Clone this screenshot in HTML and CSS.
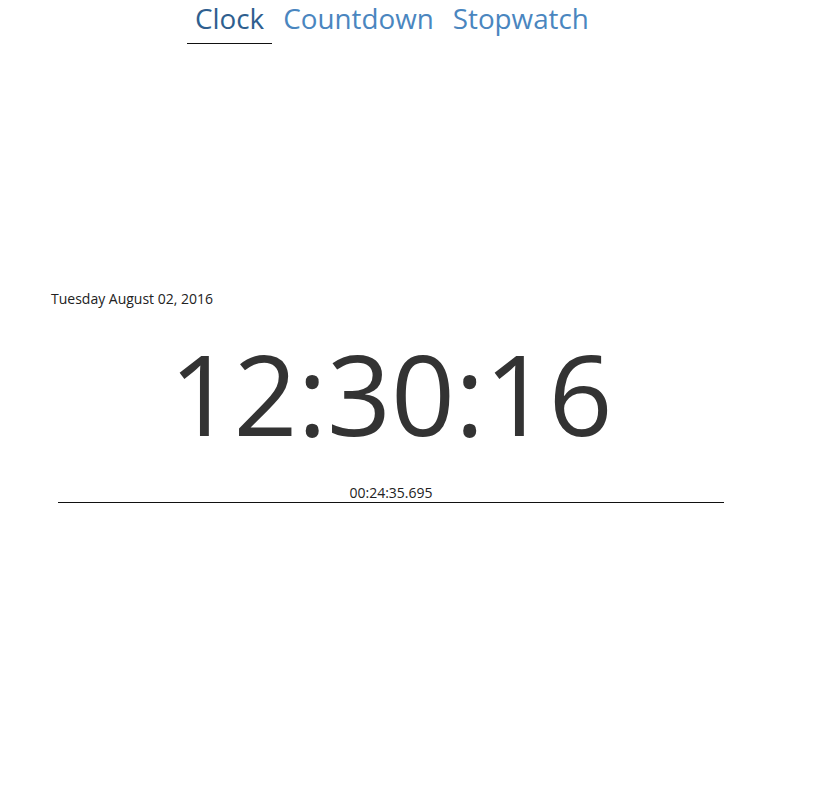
FILE: index.html
```html
<!DOCTYPE html>
<html>
<head>
<meta charset="utf-8">
<link rel="stylesheet" href="styles.css">
</head>
<body>
<nav class="tabs">
  <a class="tab active">Clock</a>
  <a class="tab">Countdown</a>
  <a class="tab">Stopwatch</a>
</nav>
<main class="clock">
  <div class="date">Tuesday August 02, 2016</div>
  <div class="time">12:30:16</div>
  <div class="elapsed">00:24:35.695</div>
</main>
</body>
</html>
```
FILE: styles.css
```css
html, body {
  margin: 0;
  padding: 0;
  background: #fff;
  font-family: "Open Sans", "DejaVu Sans", sans-serif;
}
.tabs {
  display: flex;
  gap: 3px;
  padding-left: 187px;
}
.tab {
  font-size: 27.8px;
  line-height: 36px;
  padding: 0 8px 7px;
  color: #4a86bf;
  border-bottom: 1px solid transparent;
}
.tab.active {
  color: #2f5f8f;
  border-bottom-color: #111;
}
.clock {
  margin: 245px 0 0 58px;
  width: 666px;
}
.date {
  margin-left: -7px;
  font-size: 14px;
  line-height: 20px;
  color: #222;
}
.time {
  text-align: center;
  font-size: 112px;
  line-height: 150px;
  color: #333;
  margin-top: 9px;
}
.elapsed {
  text-align: center;
  font-size: 14px;
  line-height: 18px;
  color: #222;
  border-bottom: 1px solid #111;
  margin-top: 16px;
}
```
